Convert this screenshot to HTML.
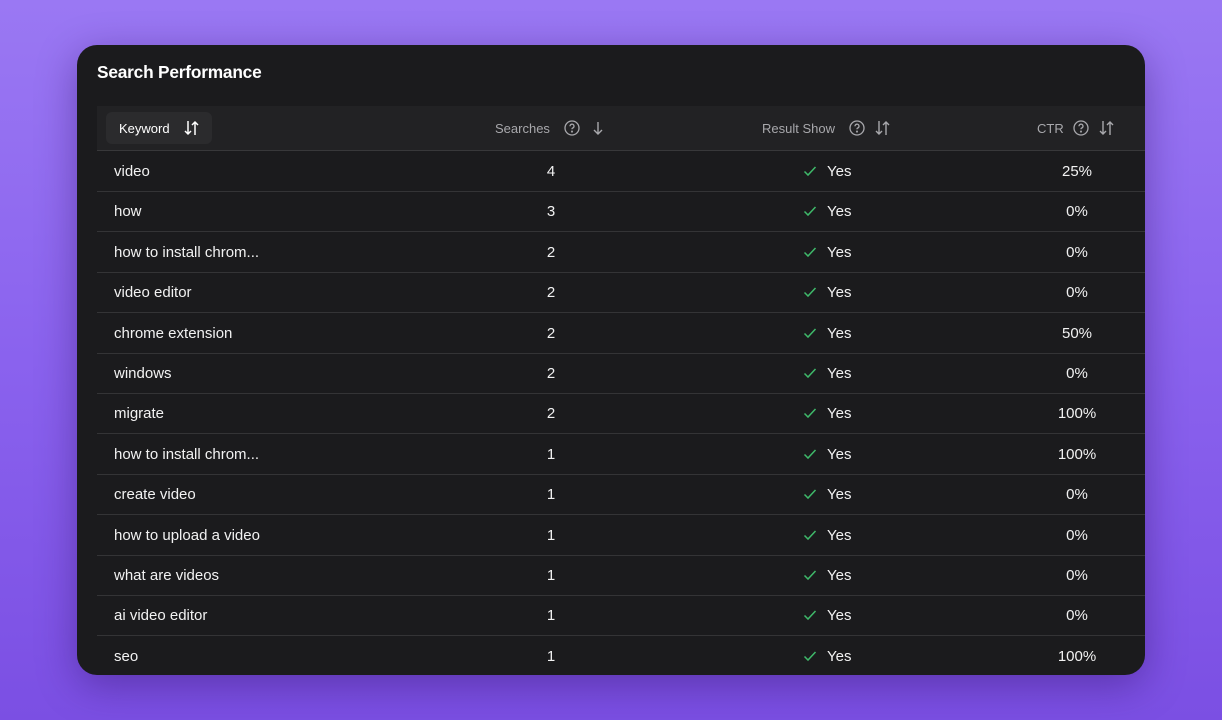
<!DOCTYPE html>
<html><head><style>
body{margin:0;width:1222px;height:720px;overflow:hidden;background:linear-gradient(180deg,#9a78f3 0%,#8a62ee 50%,#7b4fe3 100%);font-family:"Liberation Sans",sans-serif;position:relative}
.card{position:absolute;left:77px;top:45px;width:1068px;height:630px;background:#1b1b1d;border-radius:20px;overflow:hidden;box-shadow:0 10px 40px rgba(40,10,90,.4)}
.title{position:absolute;left:20px;top:17px;color:#fff;font-weight:bold;font-size:17.3px;letter-spacing:-.2px}
.hdr{position:absolute;left:20px;top:61px;right:0;height:44px;background:#222224;border-bottom:1px solid #38383a}
.kw{position:absolute;left:9px;top:6px;width:106px;height:32px;background:#2b2b2d;border-radius:6px}
.h{position:absolute;top:15px;color:#a8a8ac;font-size:13px}
.row{position:absolute;left:20px;right:0;height:40px;border-bottom:1px solid #343436;color:#f2f2f2;font-size:15px}
.row span{position:absolute;top:12px}
.c1{left:17px}.c2{left:440px;width:28px;text-align:center}.c3{left:730px}.c4{left:940px;width:80px;text-align:center}
svg{position:absolute}
</style></head><body>
<div class="card">
<div class="title">Search Performance</div>
<div class="hdr">
<div class="kw"></div>
<span class="h" style="left:22px;color:#fff">Keyword</span>
<svg style="left:86px;top:13px" width="18" height="18" viewBox="0 0 18 18" fill="none" stroke="#fff" stroke-width="1.5"><path d="M5 2v13M2 12l3 3 3-3M12 16V3M9 6l3-3 3 3"/></svg>
<span class="h" style="left:398px">Searches</span>
<svg style="left:466px;top:13px" width="18" height="18" viewBox="0 0 18 18" fill="none" stroke="#a8a8ac" stroke-width="1.3"><circle cx="9" cy="9" r="7"/><path d="M7 7.2a2 2 0 1 1 2.5 1.9c-.5.2-.5.6-.5 1.2"/><circle cx="9" cy="12.6" r=".4" fill="#a8a8ac"/></svg>
<svg style="left:492px;top:13px" width="18" height="18" viewBox="0 0 18 18" fill="none" stroke="#a8a8ac" stroke-width="1.4"><path d="M9 3v12M5 11l4 4 4-4"/></svg>
<span class="h" style="left:665px">Result Show</span>
<svg style="left:751px;top:13px" width="18" height="18" viewBox="0 0 18 18" fill="none" stroke="#a8a8ac" stroke-width="1.3"><circle cx="9" cy="9" r="7"/><path d="M7 7.2a2 2 0 1 1 2.5 1.9c-.5.2-.5.6-.5 1.2"/><circle cx="9" cy="12.6" r=".4" fill="#a8a8ac"/></svg>
<svg style="left:777px;top:13px" width="18" height="18" viewBox="0 0 18 18" fill="none" stroke="#a8a8ac" stroke-width="1.4"><path d="M5 2v13M2 12l3 3 3-3M12 16V3M9 6l3-3 3 3"/></svg>
<span class="h" style="left:940px">CTR</span>
<svg style="left:975px;top:13px" width="18" height="18" viewBox="0 0 18 18" fill="none" stroke="#a8a8ac" stroke-width="1.3"><circle cx="9" cy="9" r="7"/><path d="M7 7.2a2 2 0 1 1 2.5 1.9c-.5.2-.5.6-.5 1.2"/><circle cx="9" cy="12.6" r=".4" fill="#a8a8ac"/></svg>
<svg style="left:1001px;top:13px" width="18" height="18" viewBox="0 0 18 18" fill="none" stroke="#a8a8ac" stroke-width="1.4"><path d="M5 2v13M2 12l3 3 3-3M12 16V3M9 6l3-3 3 3"/></svg>
</div>
<div id="rows"></div>
</div>
<script>
var d=[["video",4,"25%"],["how",3,"0%"],["how to install chrom...",2,"0%"],["video editor",2,"0%"],["chrome extension",2,"50%"],["windows",2,"0%"],["migrate",2,"100%"],["how to install chrom...",1,"100%"],["create video",1,"0%"],["how to upload a video",1,"0%"],["what are videos",1,"0%"],["ai video editor",1,"0%"],["seo",1,"100%"]];
var h="";d.forEach(function(r,i){h+='<div class="row" style="top:'+(106+i*40.4)+'px"><span class="c1">'+r[0]+'</span><span class="c2">'+r[1]+'</span><svg style="left:706px;top:13px" width="14" height="14" viewBox="0 0 14 14" fill="none" stroke="#3fb96a" stroke-width="1.5"><path d="M1.5 7.5l3.5 3.5 7.5-8"/></svg><span class="c3">Yes</span><span class="c4">'+r[2]+'</span></div>'});
document.getElementById("rows").innerHTML=h;
</script>
</body></html>
